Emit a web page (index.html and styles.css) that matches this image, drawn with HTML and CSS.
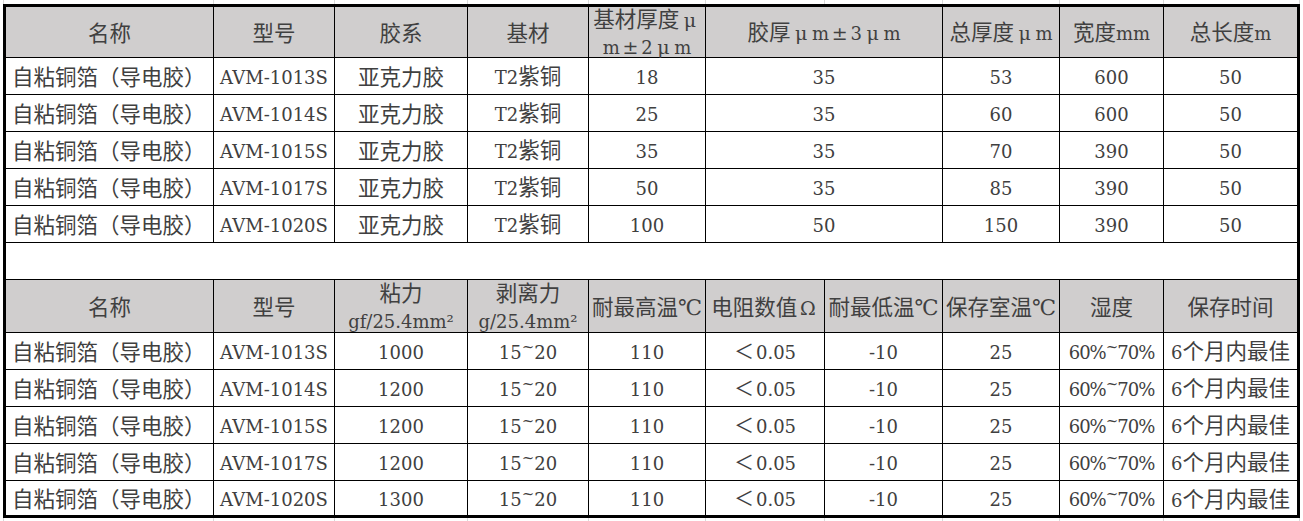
FILE: index.html
```html
<!DOCTYPE html>
<html lang="zh-CN">
<head>
<meta charset="utf-8">
<title>自粘铜箔参数表</title>
<link rel="stylesheet" href="styles.css">
</head>
<body>
<div class="page">
  <div class="strip g10s"><span></span><span></span><span></span><span></span><span></span><span></span><span></span><span></span><span></span><span></span></div>
  <div class="sheet">
    <div class="grid g9">
      <div class="c h">名称</div>
      <div class="c h">型号</div>
      <div class="c h">胶系</div>
      <div class="c h">基材</div>
      <div class="c h two"><span>基材厚度<span class="fw">μ</span><br><span class="l">m</span><span class="fw">±</span><span class="l">2</span><span class="fw">μ</span><span class="l">m</span></span></div>
      <div class="c h"><span>胶厚<span class="fw">μ</span><span class="l">m</span><span class="fw">±</span><span class="l">3</span><span class="fw">μ</span><span class="l">m</span></span></div>
      <div class="c h"><span>总厚度<span class="fw">μ</span><span class="l">m</span></span></div>
      <div class="c h"><span>宽度<span class="l">mm</span></span></div>
      <div class="c h"><span>总长度<span class="l">m</span></span></div>

      <div class="c name">自粘铜箔（导电胶）</div>
      <div class="c n">AVM-1013S</div>
      <div class="c">亚克力胶</div>
      <div class="c"><span><span class="l">T2</span>紫铜</span></div>
      <div class="c n">18</div>
      <div class="c n">35</div>
      <div class="c n">53</div>
      <div class="c n">600</div>
      <div class="c n">50</div>

      <div class="c name">自粘铜箔（导电胶）</div>
      <div class="c n">AVM-1014S</div>
      <div class="c">亚克力胶</div>
      <div class="c"><span><span class="l">T2</span>紫铜</span></div>
      <div class="c n">25</div>
      <div class="c n">35</div>
      <div class="c n">60</div>
      <div class="c n">600</div>
      <div class="c n">50</div>

      <div class="c name">自粘铜箔（导电胶）</div>
      <div class="c n">AVM-1015S</div>
      <div class="c">亚克力胶</div>
      <div class="c"><span><span class="l">T2</span>紫铜</span></div>
      <div class="c n">35</div>
      <div class="c n">35</div>
      <div class="c n">70</div>
      <div class="c n">390</div>
      <div class="c n">50</div>

      <div class="c name">自粘铜箔（导电胶）</div>
      <div class="c n">AVM-1017S</div>
      <div class="c">亚克力胶</div>
      <div class="c"><span><span class="l">T2</span>紫铜</span></div>
      <div class="c n">50</div>
      <div class="c n">35</div>
      <div class="c n">85</div>
      <div class="c n">390</div>
      <div class="c n">50</div>

      <div class="c name">自粘铜箔（导电胶）</div>
      <div class="c n">AVM-1020S</div>
      <div class="c">亚克力胶</div>
      <div class="c"><span><span class="l">T2</span>紫铜</span></div>
      <div class="c n">100</div>
      <div class="c n">50</div>
      <div class="c n">150</div>
      <div class="c n">390</div>
      <div class="c n">50</div>
    </div>

    <div class="gap"></div>

    <div class="grid g10">
      <div class="c h">名称</div>
      <div class="c h">型号</div>
      <div class="c h two"><span>粘力<br><span class="l">gf/25.4mm²</span></span></div>
      <div class="c h two"><span>剥离力<br><span class="l">g/25.4mm²</span></span></div>
      <div class="c h">耐最高温℃</div>
      <div class="c h"><span>电阻数值<span class="fw">Ω</span></span></div>
      <div class="c h">耐最低温℃</div>
      <div class="c h">保存室温℃</div>
      <div class="c h">湿度</div>
      <div class="c h">保存时间</div>

      <div class="c name">自粘铜箔（导电胶）</div>
      <div class="c n">AVM-1013S</div>
      <div class="c n">1000</div>
      <div class="c n"><span>15<span class="t">~</span>20</span></div>
      <div class="c n">110</div>
      <div class="c n"><span><span class="fw lt">＜</span>0.05</span></div>
      <div class="c n">-10</div>
      <div class="c n">25</div>
      <div class="c n hum"><span>60%<span class="t">~</span>70%</span></div>
      <div class="c"><span><span class="l">6</span>个月内最佳</span></div>

      <div class="c name">自粘铜箔（导电胶）</div>
      <div class="c n">AVM-1014S</div>
      <div class="c n">1200</div>
      <div class="c n"><span>15<span class="t">~</span>20</span></div>
      <div class="c n">110</div>
      <div class="c n"><span><span class="fw lt">＜</span>0.05</span></div>
      <div class="c n">-10</div>
      <div class="c n">25</div>
      <div class="c n hum"><span>60%<span class="t">~</span>70%</span></div>
      <div class="c"><span><span class="l">6</span>个月内最佳</span></div>

      <div class="c name">自粘铜箔（导电胶）</div>
      <div class="c n">AVM-1015S</div>
      <div class="c n">1200</div>
      <div class="c n"><span>15<span class="t">~</span>20</span></div>
      <div class="c n">110</div>
      <div class="c n"><span><span class="fw lt">＜</span>0.05</span></div>
      <div class="c n">-10</div>
      <div class="c n">25</div>
      <div class="c n hum"><span>60%<span class="t">~</span>70%</span></div>
      <div class="c"><span><span class="l">6</span>个月内最佳</span></div>

      <div class="c name">自粘铜箔（导电胶）</div>
      <div class="c n">AVM-1017S</div>
      <div class="c n">1200</div>
      <div class="c n"><span>15<span class="t">~</span>20</span></div>
      <div class="c n">110</div>
      <div class="c n"><span><span class="fw lt">＜</span>0.05</span></div>
      <div class="c n">-10</div>
      <div class="c n">25</div>
      <div class="c n hum"><span>60%<span class="t">~</span>70%</span></div>
      <div class="c"><span><span class="l">6</span>个月内最佳</span></div>

      <div class="c name">自粘铜箔（导电胶）</div>
      <div class="c n">AVM-1020S</div>
      <div class="c n">1300</div>
      <div class="c n"><span>15<span class="t">~</span>20</span></div>
      <div class="c n">110</div>
      <div class="c n"><span><span class="fw lt">＜</span>0.05</span></div>
      <div class="c n">-10</div>
      <div class="c n">25</div>
      <div class="c n hum"><span>60%<span class="t">~</span>70%</span></div>
      <div class="c"><span><span class="l">6</span>个月内最佳</span></div>
    </div>
  </div>
  <div class="strip g10s"><span></span><span></span><span></span><span></span><span></span><span></span><span></span><span></span><span></span><span></span></div>
</div>
</body>
</html>
```
FILE: styles.css
```css
html, body {
  margin: 0;
  padding: 0;
  background: #ffffff;
}

body {
  color: #404040;
  font-family: "DejaVu Serif", "Noto Sans CJK SC", serif;
}

.page {
  padding-left: 3px;
}

.strip {
  display: grid;
  height: 4px;
  width: 1297px;
}

.g10s {
  grid-template-columns: 211px 121px 133px 121px 117px 119px 118px 117px 104px 136px;
}

.strip span {
  border-right: 1px solid #d9d9d9;
}

.strip span:first-child {
  border-left: 1px solid #d9d9d9;
}

.sheet {
  box-sizing: border-box;
  width: 1297px;
  border: 3px solid #000000;
}

.grid {
  display: grid;
}

.g9 {
  grid-template-columns: 208px 121px 133px 121px 117px 237px 117px 104px 133px;
}

.g10 {
  grid-template-columns: 208px 121px 133px 121px 117px 119px 118px 117px 104px 133px;
}

.c {
  box-sizing: border-box;
  height: 37px;
  display: flex;
  align-items: center;
  justify-content: center;
  text-align: center;
  border-right: 1px solid #000000;
  border-bottom: 1px solid #000000;
  font-size: 21.5px;
  line-height: 26px;
  padding-top: 3px;
  white-space: nowrap;
}

.g9 > .c:nth-child(9n),
.g10 > .c:nth-child(10n) {
  border-right: 0;
}

.g10 > .c:nth-last-child(-n+10) {
  height: 34px;
  border-bottom: 0;
  padding-top: 4px;
}

.h {
  background: #d0cece;
  padding-top: 3px;
}

.g9 > .h {
  height: 51px;
}

.g10 > .h {
  height: 53px;
}

.two {
  line-height: 27px;
}

.name {
  justify-content: flex-start;
  padding-left: 6px;
}

.n,
.l {
  font-size: 18px;
}

.hum {
  letter-spacing: -1px;
}

.fw {
  display: inline-block;
  width: 21.5px;
  text-align: center;
  font-size: 19px;
  line-height: 18px;
}

.fw.lt {
  width: 22px;
  font-family: "Noto Sans CJK SC", sans-serif;
  font-size: 20px;
  text-align: left;
}

.t {
  display: inline-block;
  font-size: 15px;
  line-height: 15px;
  transform: translateY(-0.45em);
}

.gap {
  height: 37px;
  box-sizing: border-box;
  border-bottom: 1px solid #000000;
}
```
